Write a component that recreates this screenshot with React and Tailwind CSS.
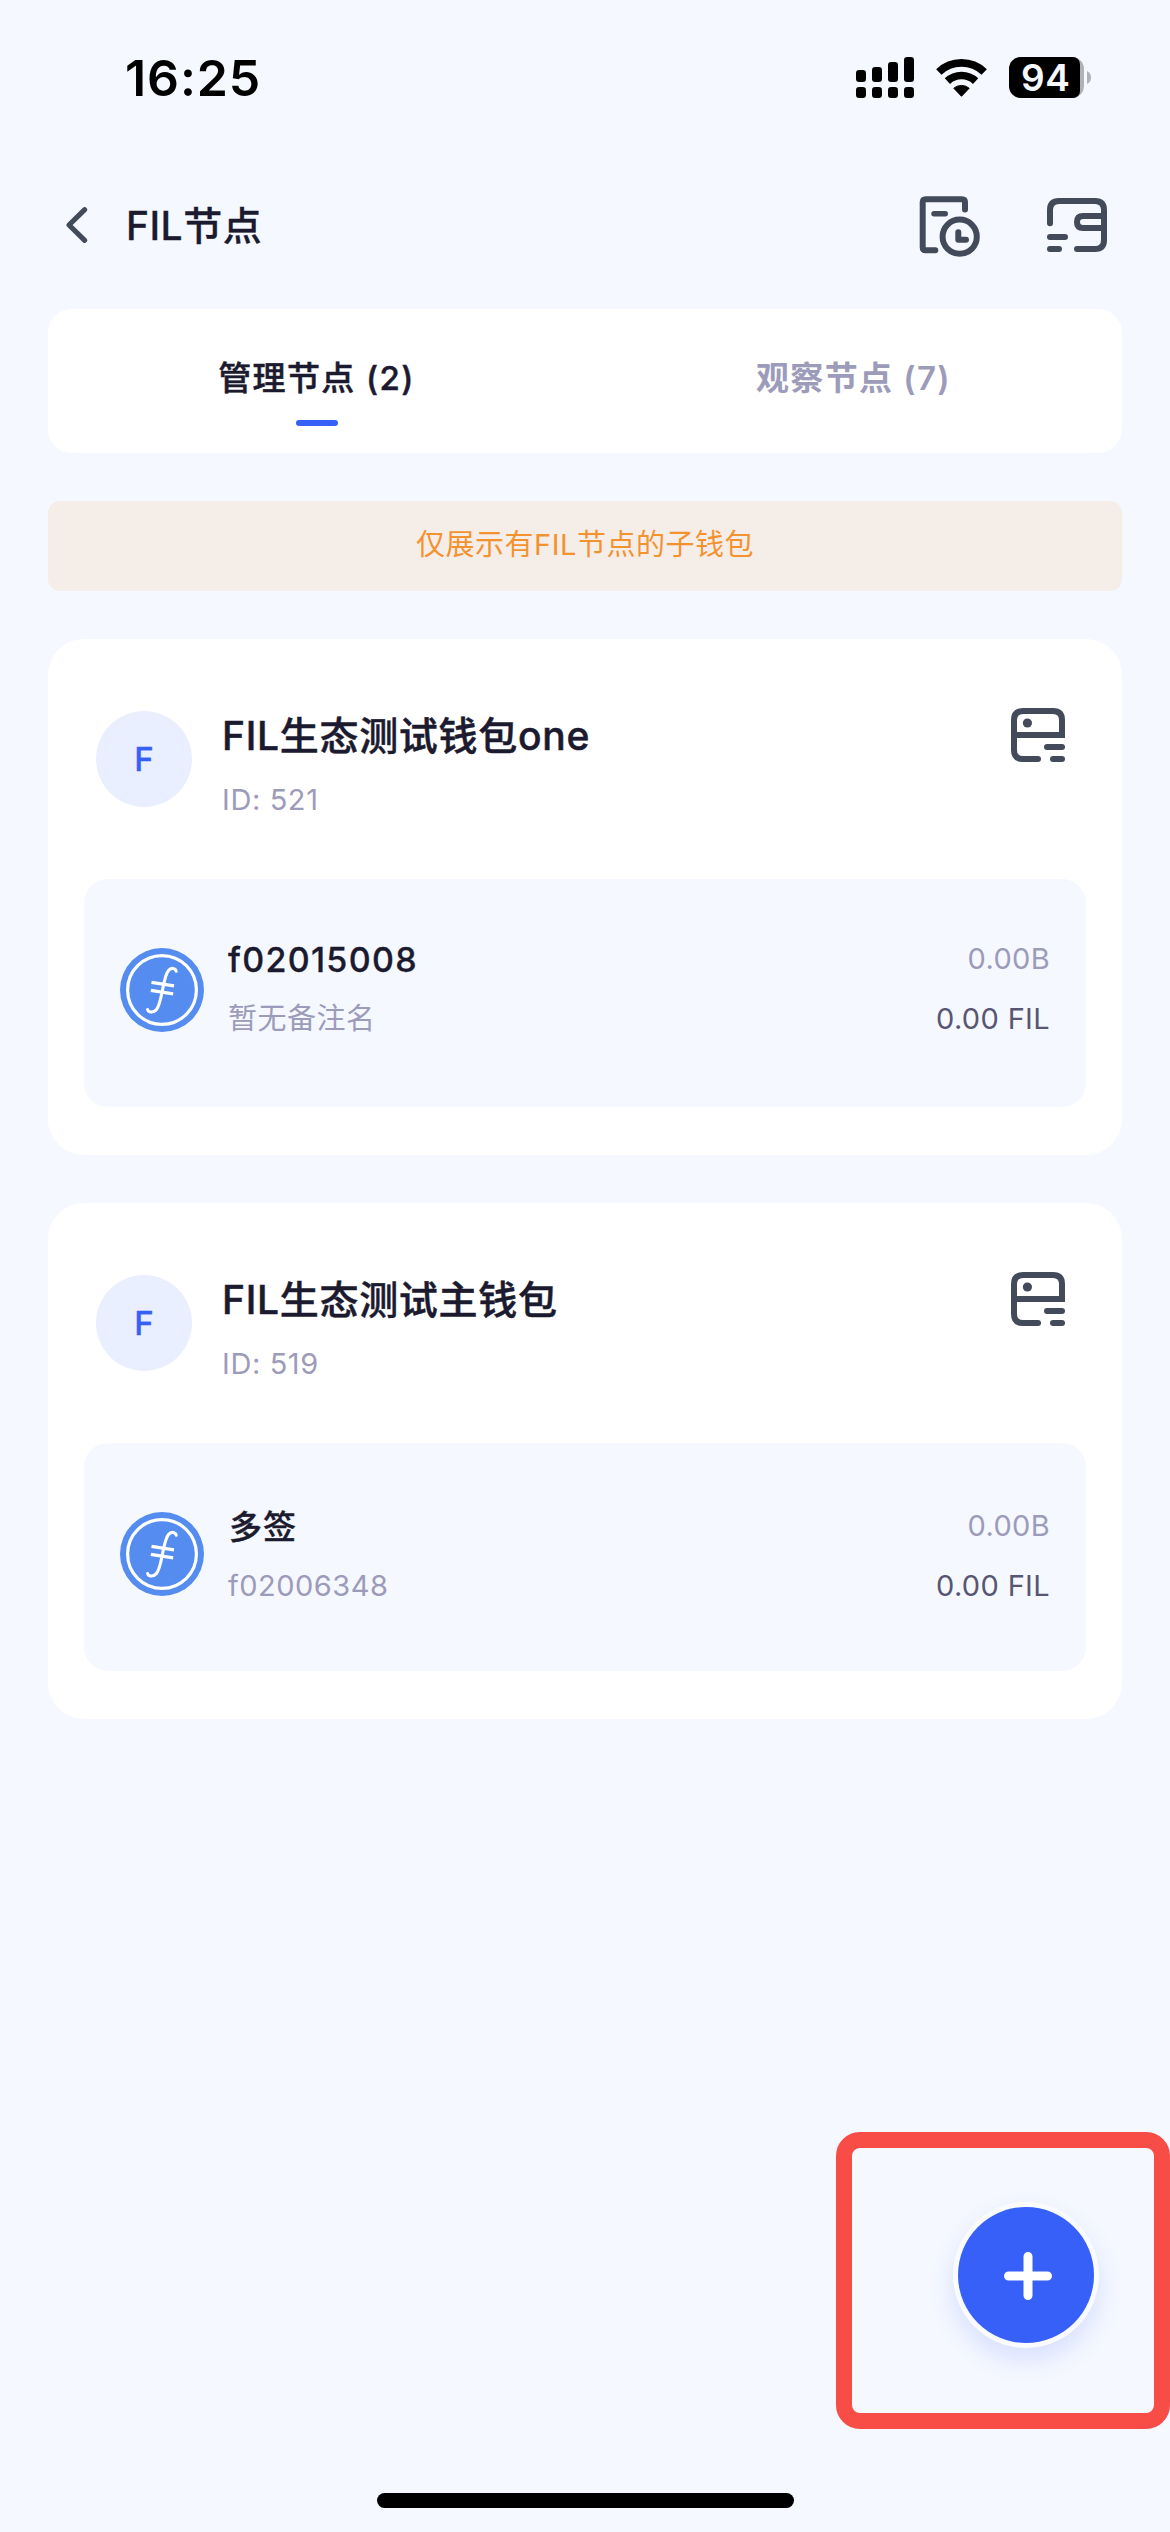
import React from "react";

const wallets = [
  {
    name: "FIL生态测试钱包one",
    id: "ID: 521",
    node: { title: "f02015008", sub: "暂无备注名", power: "0.00B", amount: "0.00 FIL" },
    titleClass: "text-[34px] tracking-[1.3px] [-webkit-text-stroke:0.3px_#1b1a2e]",
    offsetClass: "pt-0",
  },
  {
    name: "FIL生态测试主钱包",
    id: "ID: 519",
    node: { title: "多签", sub: "f02006348", power: "0.00B", amount: "0.00 FIL" },
    titleClass: "pl-px text-[33px] tracking-[0.9px] [-webkit-text-stroke:0.4px_#1b1a2e]",
    offsetClass: "pt-[3px]",
  },
];

function StatusBar() {
  return (
    <div className="flex h-[156px] items-start justify-between pl-[125px] pr-[79px]">
      <div className="mt-[48px] text-[50px] leading-[60px] font-semibold tracking-[0.9px] text-black">16:25</div>
      <div className="mt-[57px] flex items-start">
        <svg width="58" height="41" viewBox="0 0 58 41" fill="#000">
          <rect x="0" y="13" width="10" height="12" rx="3.2" />
          <rect x="16" y="10" width="10" height="15" rx="3.2" />
          <rect x="32" y="5" width="10" height="20" rx="3.2" />
          <rect x="48" y="0" width="10" height="25" rx="3.2" />
          <rect x="0" y="30" width="10" height="11" rx="3.2" />
          <rect x="16" y="30" width="10" height="11" rx="3.2" />
          <rect x="32" y="30" width="10" height="11" rx="3.2" />
          <rect x="48" y="30" width="10" height="11" rx="3.2" />
        </svg>
        <svg className="mt-px ml-[22px]" width="51" height="39" viewBox="0 0 51 39" fill="none" stroke="#000" strokeWidth="7.7">
          <path d="M2.8 14A33 33 0 0 1 48.2 14" />
          <path d="M11.4 23.1A20.5 20.5 0 0 1 39.6 23.1" />
          <path d="M25.5 38.3L17.8 30.2A12 12 0 0 1 33.2 30.2Z" fill="#000" stroke="#000" strokeWidth="1" strokeLinejoin="round" />
        </svg>
        <div className="ml-[22px] flex h-[41px] w-[75px] rounded-[12px] bg-[#b0b2b7]">
          <div className="h-[41px] w-[71px] rounded-l-[12px] rounded-r-[7px] bg-black pl-[12px] text-[37px] leading-[41px] font-semibold tracking-[0.5px] text-[#f5f8ff]">94</div>
        </div>
        <svg className="mt-[14px] ml-[3px]" width="4" height="13" viewBox="0 0 4 13">
          <path d="M0 0Q4 2 4 6.5T0 13Z" fill="#b0b2b7" />
        </svg>
      </div>
    </div>
  );
}

function Header() {
  return (
    <div className="flex h-[153px] items-start pl-[62px]">
      <svg className="mt-[49px]" width="30" height="40" viewBox="0 0 30 40" fill="none" stroke="#434a5a" strokeWidth="5.2" strokeLinecap="round" strokeLinejoin="round">
        <path d="M22.7 4.7L7 20L22.7 35.3" />
      </svg>
      <div className="mt-[46px] ml-[34px] text-[39px] leading-[48px] font-medium tracking-[0.5px] text-[#1b1a2e] [-webkit-text-stroke:0.3px_#1b1a2e]">FIL节点</div>
      <div className="ml-auto flex pr-[58px]">
        <svg className="mt-[34px]" width="70" height="72" viewBox="0 0 70 72" fill="none" stroke="#434a5a" strokeWidth="6" strokeLinecap="round" strokeLinejoin="round">
          <path d="M50 19.5V12.3Q50 9.3 47 9.3H10.7Q7.7 9.3 7.7 12.3V57.3Q7.7 60.3 10.7 60.3H20.3" />
          <path d="M19 23.7H30.3" strokeWidth="5.4" />
          <circle cx="44.7" cy="46.7" r="17.1" />
          <path d="M43.3 42.3V49.8H51" />
        </svg>
        <svg className="mt-[34px] ml-[57px]" width="70" height="72" viewBox="0 0 70 72" fill="none" stroke="#434a5a" strokeWidth="6" strokeLinecap="round">
          <path d="M8 33.3V20Q8 11 17 11H53Q62 11 62 20V50Q62 59 53 59H35" />
          <path d="M62 26H41Q35 26 35 32T41 38H62" />
          <path d="M8 47H23M8 59H17" />
        </svg>
      </div>
    </div>
  );
}

function Tabs() {
  return (
    <div className="mx-[48px] flex h-[144px] rounded-[24px] bg-white text-[33px] leading-[42px] tracking-[1.4px]">
      <div className="flex flex-1 flex-col items-center pt-[48px] text-[#1b1a2e]">
        <div className="font-medium [-webkit-text-stroke:0.5px_#1b1a2e]">管理节点 (2)</div>
        <div className="mt-[21px] h-[6px] w-[42px] rounded-[3px] bg-[#3760f8]" />
      </div>
      <div className="flex flex-1 flex-col items-center pt-[48px] text-[#9d9bba]">
        <div className="font-semibold">观察节点 (7)</div>
      </div>
    </div>
  );
}

function ServerIcon() {
  return (
    <svg className="-mt-[3px] ml-auto" width="54" height="54" viewBox="0 0 54 54" fill="none" stroke="#434a5a" strokeWidth="6">
      <path d="M3 27V12Q3 3 12 3H42Q51 3 51 12V30" />
      <path d="M3 27H51" />
      <path d="M3 27V42Q3 51 12 51H27" strokeLinecap="round" />
      <path d="M36 39H51M42 51H51" strokeLinecap="round" />
      <circle cx="16.4" cy="15" r="4.6" fill="#434a5a" stroke="none" />
    </svg>
  );
}

function FilCoin() {
  return (
    <svg className="mt-[69px] shrink-0" width="84" height="84" viewBox="0 0 84 84" fill="none" stroke="#fff">
      <circle cx="42" cy="42" r="42" fill="#548cef" stroke="none" />
      <circle cx="42" cy="42" r="34.4" strokeWidth="3.2" />
      <path d="M56.2 23.2C55.5 19.8 51.5 19.6 48.8 22.2C46 25 44.6 31 42.6 41.5C40.4 53 39.2 58.5 36.4 61.6C33.6 64.8 28.6 65 27.6 61.6" strokeWidth="3.1" strokeLinecap="round" />
      <path d="M31.5 34.4L54 37.8M30.8 42.4L53.2 45.8" strokeWidth="3.2" />
    </svg>
  );
}

function WalletCard({ wallet }) {
  const { node } = wallet;
  return (
    <div className="mx-[48px] mt-[48px] h-[516px] rounded-[36px] bg-white px-[36px]">
      <div className="flex h-[240px] items-start pt-[72px] pr-[21px] pl-[12px]">
        <div className="flex h-[96px] w-[96px] items-center justify-center rounded-full bg-[#e9effe] pt-px text-[33px] font-medium text-[#3760f8] [-webkit-text-stroke:0.3px_#3760f8]">F</div>
        <div className="ml-[30px] pt-px">
          <div className="text-[39px] leading-[48px] font-medium tracking-[0.7px] text-[#1b1a2e] [-webkit-text-stroke:0.5px_#1b1a2e]">{wallet.name}</div>
          <div className="mt-[22px] text-[29px] leading-[36px] tracking-[0.6px] text-[#9d9bba]">{wallet.id}</div>
        </div>
        <ServerIcon />
      </div>
      <div className="flex h-[228px] items-start rounded-[24px] bg-[#f5f8ff] px-[36px]">
        <FilCoin />
        <div className={`ml-[24px] ${wallet.offsetClass}`}>
          <div className={`mt-[60px] leading-[42px] font-medium text-[#1b1a2e] ${wallet.titleClass}`}>{node.title}</div>
          <div className="mt-[20px] text-[29px] leading-[36px] tracking-[0.5px] text-[#9d9bba]">{node.sub}</div>
        </div>
        <div className={`ml-auto text-right text-[29px] leading-[36px] tracking-[0.35px] ${wallet.offsetClass}`}>
          <div className="mt-[62px] text-[#9d9bba]">{node.power}</div>
          <div className="mt-[24px] text-[#585672]">{node.amount}</div>
        </div>
      </div>
    </div>
  );
}

export default function App() {
  return (
    <div className="relative flex h-[2532px] w-[1170px] flex-col overflow-hidden bg-[#f5f8ff] font-['Inter','Noto_Sans_CJK_SC',sans-serif]">
      <StatusBar />
      <Header />
      <Tabs />
      <div className="mx-[48px] mt-[48px] h-[90px] rounded-[12px] bg-[#f5ede8] pt-[26px] text-center text-[29px] leading-[36px] tracking-[0.5px] text-[#f39330]">
        仅展示有FIL节点的子钱包
      </div>
      {wallets.map((w) => (
        <WalletCard key={w.id} wallet={w} />
      ))}
      <div className="absolute top-[2132px] right-0 h-[297px] w-[334px] rounded-[24px] border-[16px] border-[#f84c47]">
        <div className="mt-[54px] ml-[101px] flex h-[146px] w-[146px] items-center justify-center rounded-full bg-[#fafbff] shadow-[0_12px_24px_rgba(55,96,248,0.15)]">
          <div className="flex h-[136px] w-[136px] items-center justify-center rounded-full bg-[#3760f8]">
            <svg width="48" height="48" viewBox="0 0 48 48" className="mt-[2px] ml-[3px]" stroke="#fff" strokeWidth="9" strokeLinecap="round">
              <path d="M4.5 24H43.5M24 4.5V43.5" />
            </svg>
          </div>
        </div>
      </div>
      <div className="mx-auto mt-auto mb-[24px] h-[15px] w-[417px] shrink-0 rounded-full bg-black" />
    </div>
  );
}
